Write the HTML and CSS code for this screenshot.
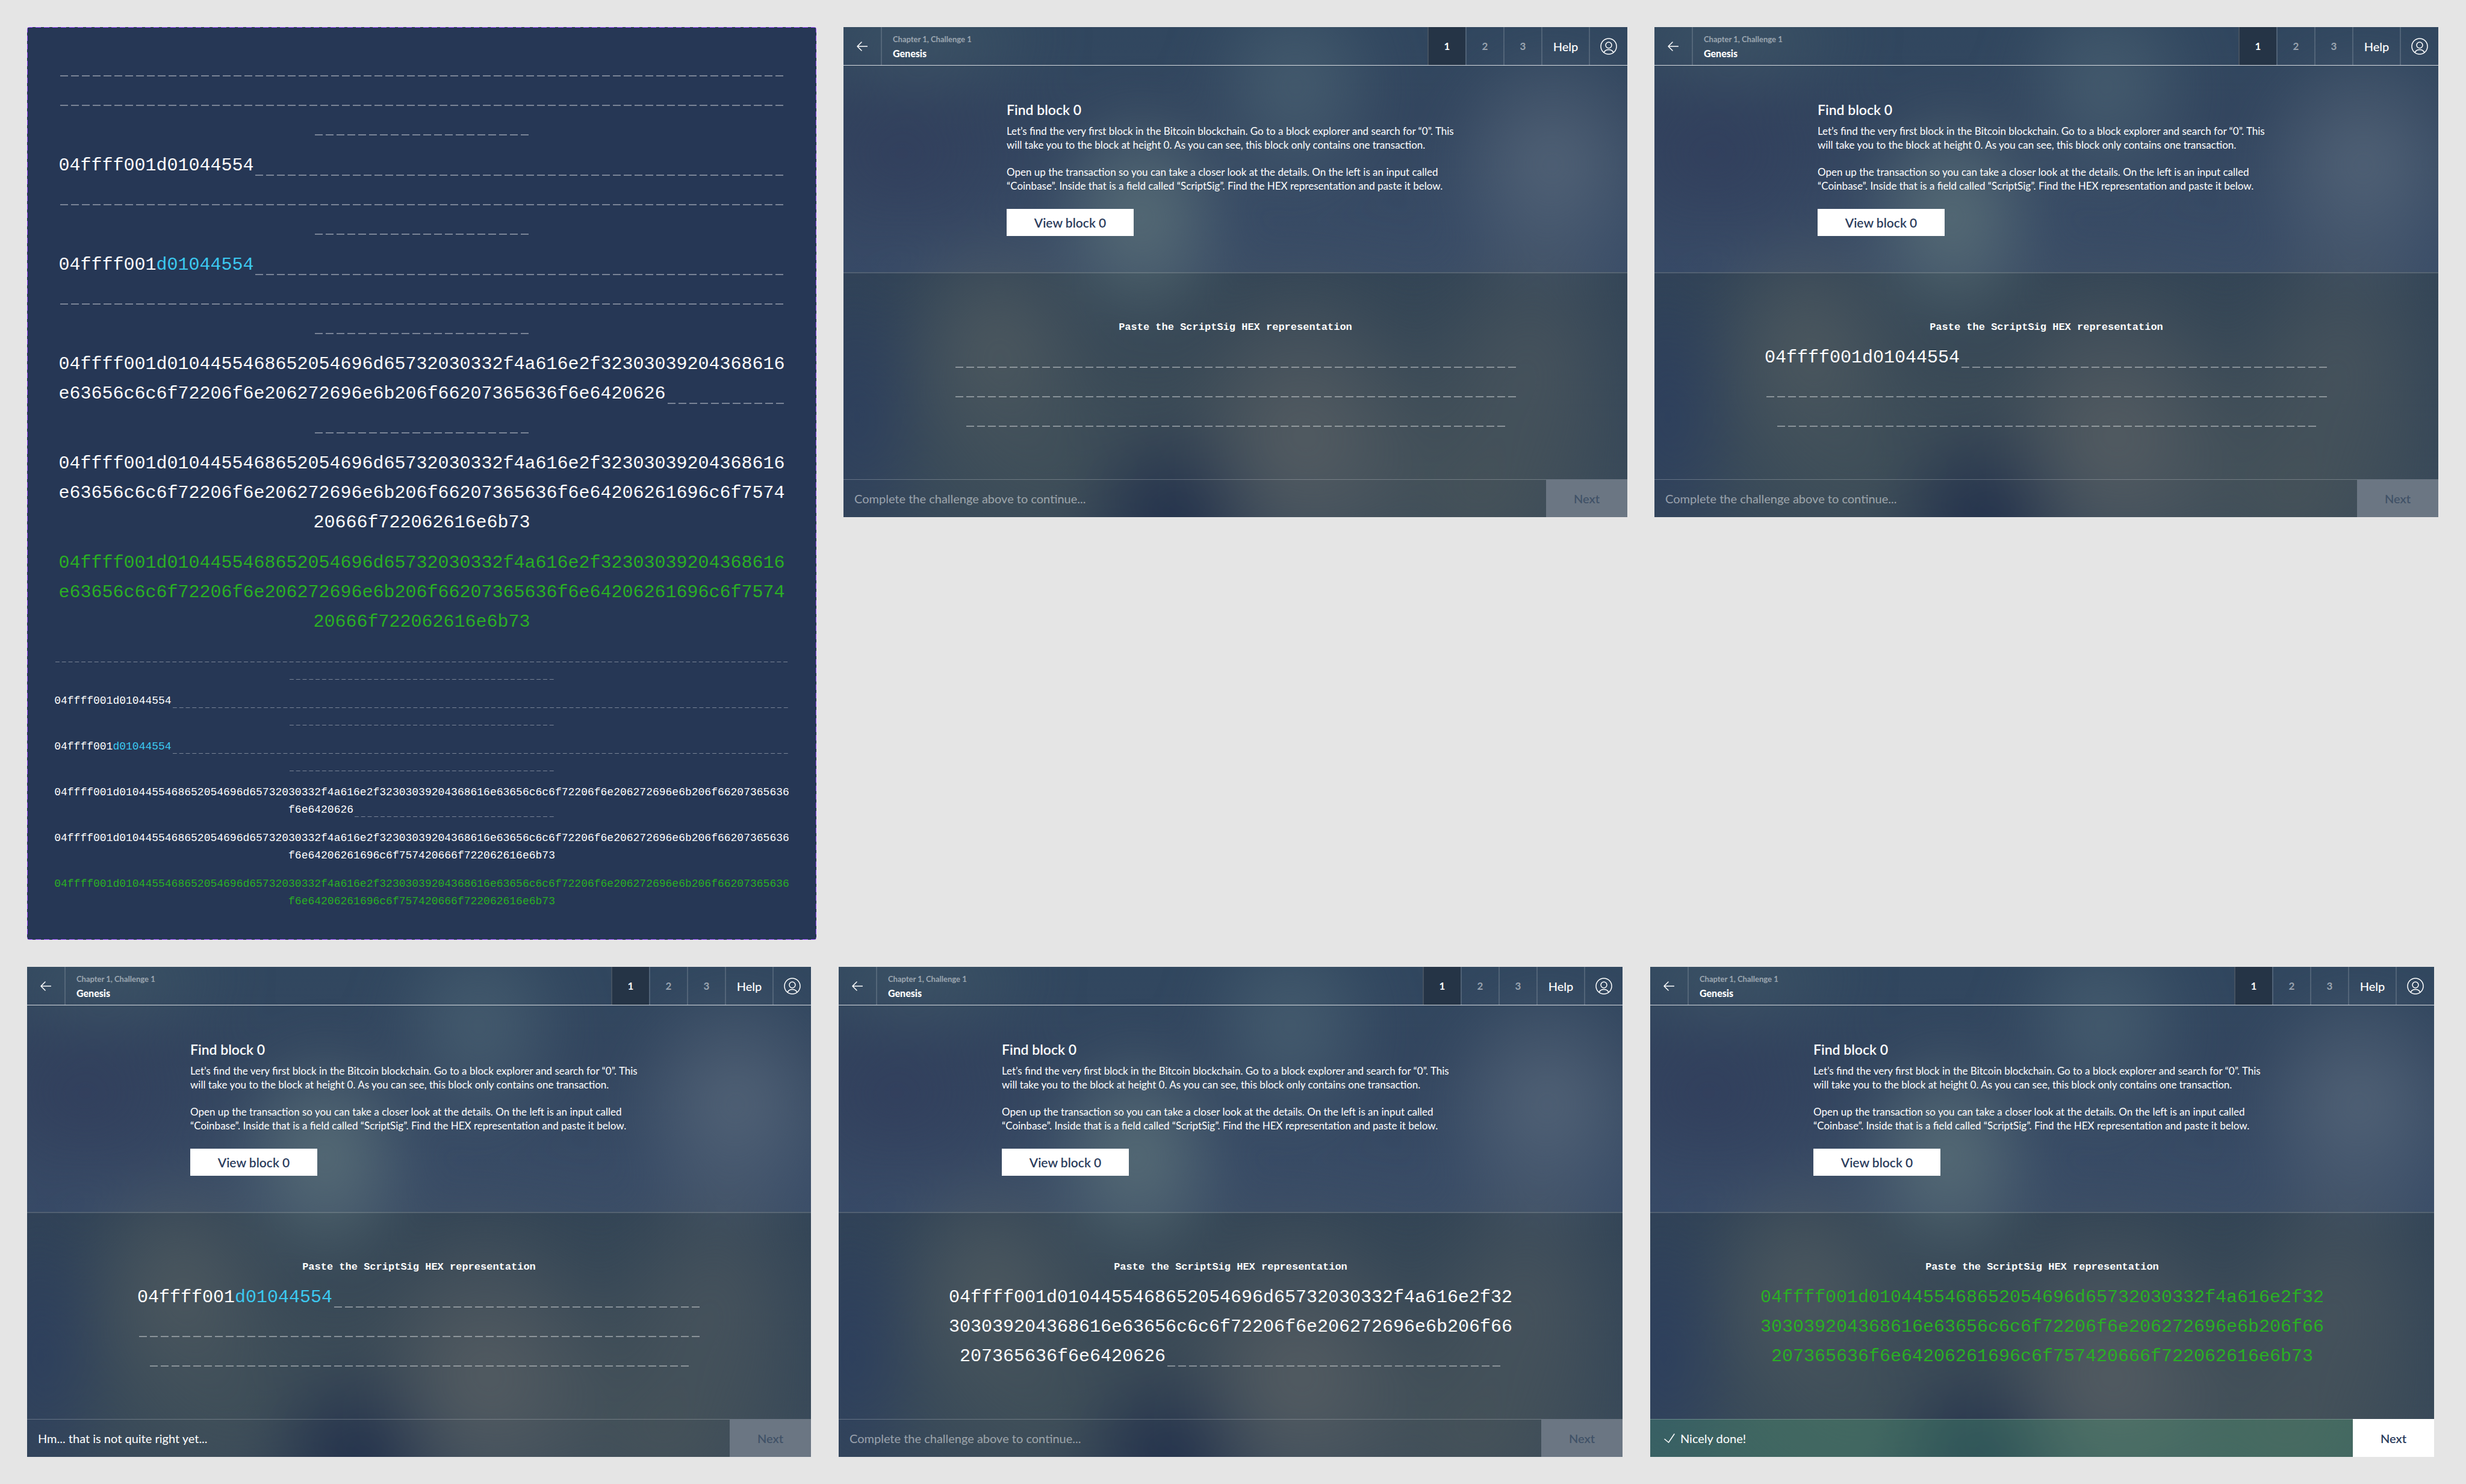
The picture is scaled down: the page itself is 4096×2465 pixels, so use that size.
FILE: index.html
```html
<!DOCTYPE html>
<html lang="en">
<head>
<meta charset="utf-8">
<meta name="viewport" content="width=device-width, initial-scale=1">
<title>Genesis – Chapter 1, Challenge 1</title>
<link rel="stylesheet" href="styles.css">
</head>
<body>
<svg class="sprite" aria-hidden="true">
  <symbol id="icon-back" viewBox="0 0 18 16"><path d="M17.5 8H1M8 1 1 8l7 7" /></symbol>
  <symbol id="icon-user" viewBox="0 0 28 28"><circle cx="14" cy="14" r="13" /><circle cx="14" cy="12" r="5" /><path d="M6 24.200c1.500-2.900 4.500-4.700 8-4.700s6.500 1.800 8 4.700" /></symbol>
  <symbol id="icon-check" viewBox="0 0 18 16"><path d="M1 9.500 7.500 15 17 1" /></symbol>
</svg>

<main class="board">
  <div class="row row-top">
    <section class="variants" aria-label="Hex input states">
      <div class="stack">
        <div class="hex">
          <p><span class="slots" style="--n:67"></span></p>
          <p><span class="slots" style="--n:67"></span></p>
          <p><span class="slots" style="--n:20"></span></p>
        </div>
        <div class="hex">
          <p>04ffff001d01044554<span class="slots" style="--n:49"></span></p>
          <p><span class="slots" style="--n:67"></span></p>
          <p><span class="slots" style="--n:20"></span></p>
        </div>
        <div class="hex">
          <p>04ffff001<mark>d01044554</mark><span class="slots" style="--n:49"></span></p>
          <p><span class="slots" style="--n:67"></span></p>
          <p><span class="slots" style="--n:20"></span></p>
        </div>
        <div class="hex">
          <p>04ffff001d0104455468652054696d65732030332f4a616e2f32303039204368616</p>
          <p>e63656c6c6f72206f6e206272696e6b206f66207365636f6e6420626<span class="slots" style="--n:11"></span></p>
          <p><span class="slots" style="--n:20"></span></p>
        </div>
        <div class="hex">
          <p>04ffff001d0104455468652054696d65732030332f4a616e2f32303039204368616</p>
          <p>e63656c6c6f72206f6e206272696e6b206f66207365636f6e64206261696c6f7574</p>
          <p>20666f722062616e6b73</p>
        </div>
        <div class="hex hex-done">
          <p>04ffff001d0104455468652054696d65732030332f4a616e2f32303039204368616</p>
          <p>e63656c6c6f72206f6e206272696e6b206f66207365636f6e64206261696c6f7574</p>
          <p>20666f722062616e6b73</p>
        </div>
      </div>
      <div class="stack">
        <div class="hex hex-small">
          <p><span class="slots" style="--n:113"></span></p>
          <p><span class="slots" style="--n:41"></span></p>
        </div>
        <div class="hex hex-small">
          <p>04ffff001d01044554<span class="slots" style="--n:95"></span></p>
          <p><span class="slots" style="--n:41"></span></p>
        </div>
        <div class="hex hex-small">
          <p>04ffff001<mark>d01044554</mark><span class="slots" style="--n:95"></span></p>
          <p><span class="slots" style="--n:41"></span></p>
        </div>
        <div class="hex hex-small">
          <p>04ffff001d0104455468652054696d65732030332f4a616e2f32303039204368616e63656c6c6f72206f6e206272696e6b206f66207365636</p>
          <p>f6e6420626<span class="slots" style="--n:31"></span></p>
        </div>
        <div class="hex hex-small">
          <p>04ffff001d0104455468652054696d65732030332f4a616e2f32303039204368616e63656c6c6f72206f6e206272696e6b206f66207365636</p>
          <p>f6e64206261696c6f757420666f722062616e6b73</p>
        </div>
        <div class="hex hex-small hex-done">
          <p>04ffff001d0104455468652054696d65732030332f4a616e2f32303039204368616e63656c6c6f72206f6e206272696e6b206f66207365636</p>
          <p>f6e64206261696c6f757420666f722062616e6b73</p>
        </div>
      </div>
    </section>

    <article class="screen">
      <header class="topbar">
        <button class="cell cell-back" aria-label="Back"><svg class="icon-back"><use href="#icon-back" /></svg></button>
        <div class="title"><p class="chapter">Chapter 1, Challenge 1</p><h1>Genesis</h1></div>
        <nav class="steps">
          <button class="cell active">1</button><button class="cell">2</button><button class="cell">3</button>
          <button class="cell cell-help">Help</button>
          <button class="cell" aria-label="Account"><svg class="icon-user"><use href="#icon-user" /></svg></button>
        </nav>
      </header>
      <section class="intro">
        <div class="copy">
          <h2>Find block 0</h2>
          <p>Let’s find the very first block in the Bitcoin blockchain. Go to a block explorer and search for “0”. This<br>will take you to the block at height 0. As you can see, this block only contains one transaction.</p>
          <p>Open up the transaction so you can take a closer look at the details. On the left is an input called<br>“Coinbase”. Inside that is a field called “ScriptSig”. Find the HEX representation and paste it below.</p>
          <button class="view">View block 0</button>
        </div>
      </section>
      <section class="answer">
        <h3>Paste the ScriptSig HEX representation</h3>
        <div class="hex">
          <p><span class="slots" style="--n:52"></span></p>
          <p><span class="slots" style="--n:52"></span></p>
          <p><span class="slots" style="--n:50"></span></p>
        </div>
      </section>
      <footer class="status">
        <p class="message">Complete the challenge above to continue...</p>
        <button class="next" disabled>Next</button>
      </footer>
    </article>

    <article class="screen">
      <header class="topbar">
        <button class="cell cell-back" aria-label="Back"><svg class="icon-back"><use href="#icon-back" /></svg></button>
        <div class="title"><p class="chapter">Chapter 1, Challenge 1</p><h1>Genesis</h1></div>
        <nav class="steps">
          <button class="cell active">1</button><button class="cell">2</button><button class="cell">3</button>
          <button class="cell cell-help">Help</button>
          <button class="cell" aria-label="Account"><svg class="icon-user"><use href="#icon-user" /></svg></button>
        </nav>
      </header>
      <section class="intro">
        <div class="copy">
          <h2>Find block 0</h2>
          <p>Let’s find the very first block in the Bitcoin blockchain. Go to a block explorer and search for “0”. This<br>will take you to the block at height 0. As you can see, this block only contains one transaction.</p>
          <p>Open up the transaction so you can take a closer look at the details. On the left is an input called<br>“Coinbase”. Inside that is a field called “ScriptSig”. Find the HEX representation and paste it below.</p>
          <button class="view">View block 0</button>
        </div>
      </section>
      <section class="answer">
        <h3>Paste the ScriptSig HEX representation</h3>
        <div class="hex">
          <p>04ffff001d01044554<span class="slots" style="--n:34"></span></p>
          <p><span class="slots" style="--n:52"></span></p>
          <p><span class="slots" style="--n:50"></span></p>
        </div>
      </section>
      <footer class="status">
        <p class="message">Complete the challenge above to continue...</p>
        <button class="next" disabled>Next</button>
      </footer>
    </article>
  </div>

  <div class="row row-bottom">
    <article class="screen">
      <header class="topbar">
        <button class="cell cell-back" aria-label="Back"><svg class="icon-back"><use href="#icon-back" /></svg></button>
        <div class="title"><p class="chapter">Chapter 1, Challenge 1</p><h1>Genesis</h1></div>
        <nav class="steps">
          <button class="cell active">1</button><button class="cell">2</button><button class="cell">3</button>
          <button class="cell cell-help">Help</button>
          <button class="cell" aria-label="Account"><svg class="icon-user"><use href="#icon-user" /></svg></button>
        </nav>
      </header>
      <section class="intro">
        <div class="copy">
          <h2>Find block 0</h2>
          <p>Let’s find the very first block in the Bitcoin blockchain. Go to a block explorer and search for “0”. This<br>will take you to the block at height 0. As you can see, this block only contains one transaction.</p>
          <p>Open up the transaction so you can take a closer look at the details. On the left is an input called<br>“Coinbase”. Inside that is a field called “ScriptSig”. Find the HEX representation and paste it below.</p>
          <button class="view">View block 0</button>
        </div>
      </section>
      <section class="answer">
        <h3>Paste the ScriptSig HEX representation</h3>
        <div class="hex">
          <p>04ffff001<mark>d01044554</mark><span class="slots" style="--n:34"></span></p>
          <p><span class="slots" style="--n:52"></span></p>
          <p><span class="slots" style="--n:50"></span></p>
        </div>
      </section>
      <footer class="status status-wrong">
        <p class="message">Hm... that is not quite right yet...</p>
        <button class="next" disabled>Next</button>
      </footer>
    </article>

    <article class="screen">
      <header class="topbar">
        <button class="cell cell-back" aria-label="Back"><svg class="icon-back"><use href="#icon-back" /></svg></button>
        <div class="title"><p class="chapter">Chapter 1, Challenge 1</p><h1>Genesis</h1></div>
        <nav class="steps">
          <button class="cell active">1</button><button class="cell">2</button><button class="cell">3</button>
          <button class="cell cell-help">Help</button>
          <button class="cell" aria-label="Account"><svg class="icon-user"><use href="#icon-user" /></svg></button>
        </nav>
      </header>
      <section class="intro">
        <div class="copy">
          <h2>Find block 0</h2>
          <p>Let’s find the very first block in the Bitcoin blockchain. Go to a block explorer and search for “0”. This<br>will take you to the block at height 0. As you can see, this block only contains one transaction.</p>
          <p>Open up the transaction so you can take a closer look at the details. On the left is an input called<br>“Coinbase”. Inside that is a field called “ScriptSig”. Find the HEX representation and paste it below.</p>
          <button class="view">View block 0</button>
        </div>
      </section>
      <section class="answer">
        <h3>Paste the ScriptSig HEX representation</h3>
        <div class="hex">
          <p>04ffff001d0104455468652054696d65732030332f4a616e2f32</p>
          <p>303039204368616e63656c6c6f72206f6e206272696e6b206f66</p>
          <p>207365636f6e6420626<span class="slots" style="--n:31"></span></p>
        </div>
      </section>
      <footer class="status">
        <p class="message">Complete the challenge above to continue...</p>
        <button class="next" disabled>Next</button>
      </footer>
    </article>

    <article class="screen">
      <header class="topbar">
        <button class="cell cell-back" aria-label="Back"><svg class="icon-back"><use href="#icon-back" /></svg></button>
        <div class="title"><p class="chapter">Chapter 1, Challenge 1</p><h1>Genesis</h1></div>
        <nav class="steps">
          <button class="cell active">1</button><button class="cell">2</button><button class="cell">3</button>
          <button class="cell cell-help">Help</button>
          <button class="cell" aria-label="Account"><svg class="icon-user"><use href="#icon-user" /></svg></button>
        </nav>
      </header>
      <section class="intro">
        <div class="copy">
          <h2>Find block 0</h2>
          <p>Let’s find the very first block in the Bitcoin blockchain. Go to a block explorer and search for “0”. This<br>will take you to the block at height 0. As you can see, this block only contains one transaction.</p>
          <p>Open up the transaction so you can take a closer look at the details. On the left is an input called<br>“Coinbase”. Inside that is a field called “ScriptSig”. Find the HEX representation and paste it below.</p>
          <button class="view">View block 0</button>
        </div>
      </section>
      <section class="answer">
        <h3>Paste the ScriptSig HEX representation</h3>
        <div class="hex hex-done">
          <p>04ffff001d0104455468652054696d65732030332f4a616e2f32</p>
          <p>303039204368616e63656c6c6f72206f6e206272696e6b206f66</p>
          <p>207365636f6e64206261696c6f757420666f722062616e6b73</p>
        </div>
      </section>
      <footer class="status status-right">
        <p class="message"><svg class="icon-check"><use href="#icon-check" /></svg>Nicely done!</p>
        <button class="next">Next</button>
      </footer>
    </article>
  </div>
</main>
</body>
</html>
```
FILE: styles.css
```css
* { box-sizing: border-box; }

body {
  margin: 0;
  background: #e5e5e5;
  color: #fff;
  font-family: Lato, "Open Sans", sans-serif;
}

h1, h2, h3, p { margin: 0; }

button {
  margin: 0;
  padding: 0;
  border: 0;
  background: none;
  color: inherit;
  font: inherit;
}

svg { fill: none; stroke: currentColor; stroke-width: 1.5; stroke-linecap: round; stroke-linejoin: round; }
.sprite { display: none; }

/* Board */
.board {
  display: flex;
  flex-direction: column;
  gap: 45px;
  padding: 45px 46px 45px 45px;
}
.row { display: grid; gap: 45px; align-items: start; }
.row-top { grid-template-columns: 1311fr 1302fr 1302fr; }
.row-bottom { grid-template-columns: repeat(3, 1fr); column-gap: 46px; padding-right: 7px; }

/* Panel with every state of the hex field */
.variants {
  --dash: #9747ff 0 9px, transparent 9px 14px;
  display: flex;
  flex-direction: column;
  gap: 16px;
  padding: 41px 0 49px;
  border-radius: 4px;
  background:
    repeating-linear-gradient(90deg, var(--dash)) 0 0 / 100% 1px no-repeat,
    repeating-linear-gradient(90deg, var(--dash)) 0 100% / 100% 1px no-repeat,
    repeating-linear-gradient(180deg, var(--dash)) 0 0 / 1px 100% no-repeat,
    repeating-linear-gradient(180deg, var(--dash)) 100% 0 / 1px 100% no-repeat,
    #263755;
}
.stack { display: flex; flex-direction: column; gap: 18px; }

/* Hex field: typed characters followed by one dash per empty place */
.hex {
  --dash-from: 3px;
  --dash-to: 16px;
  --dash-top: 39px;
  --dash-height: 2px;
  font-family: "Liberation Mono", monospace;
  font-size: 30px;
  line-height: 49px;
  text-align: center;
  white-space: nowrap;
}
.hex p { display: flex; justify-content: center; height: 49px; }
.hex mark { background: none; color: #3cc9f0; }
.hex-done { color: #2ab024; }
.slots {
  width: calc(var(--n) * 1ch);
  background: linear-gradient(90deg, transparent var(--dash-from), rgba(255, 255, 255, .38) var(--dash-from) var(--dash-to), transparent var(--dash-to)) 0 var(--dash-top) / 1ch var(--dash-height) repeat-x;
}
.hex-small {
  --dash-from: 2px;
  --dash-to: 9px;
  --dash-top: 25px;
  --dash-height: 1px;
  font-size: 18px;
  line-height: 29px;
}
.hex-small p { height: 29px; }

/* Challenge screen */
.screen {
  position: relative;
  isolation: isolate;
  overflow: hidden;
  display: flex;
  flex-direction: column;
  aspect-ratio: 1302 / 814;
  background: linear-gradient(#31475f 0, #33465f 18%, #3a4d68 50%, #324456 50%, #35475a 100%);
}
/* Soft, out-of-focus lights behind the whole screen */
.screen::before {
  content: "";
  position: absolute;
  z-index: -1;
  inset: -60px;
  filter: blur(36px);
  background:
    radial-gradient(12% 22% at 57% 17%, rgba(78, 102, 118, .7), transparent),
    radial-gradient(14% 24% at 87% 31%, rgba(92, 108, 126, .75), transparent),
    radial-gradient(12% 22% at 39% 40%, rgba(94, 116, 122, .85), transparent),
    radial-gradient(16% 14% at 14% 8%, rgba(72, 96, 108, .5), transparent),
    radial-gradient(20% 22% at 11% 29%, rgba(48, 58, 90, .6), transparent),
    radial-gradient(13% 24% at 22% 63%, rgba(84, 94, 98, .75), transparent),
    radial-gradient(15% 32% at 58% 80%, rgba(92, 98, 102, .75), transparent),
    radial-gradient(13% 25% at 85% 64%, rgba(80, 90, 96, .6), transparent),
    radial-gradient(13% 22% at 43% 96%, rgba(32, 46, 74, 1), transparent),
    radial-gradient(10% 34% at 5% 75%, rgba(42, 60, 96, .7), transparent),
    radial-gradient(22% 32% at 79% 90%, rgba(78, 88, 90, .65), transparent),
    radial-gradient(24% 30% at 27% 86%, rgba(72, 86, 90, .5), transparent),
    radial-gradient(50% 36% at 54% 76%, rgba(68, 80, 84, .5), transparent);
}

.topbar {
  display: flex;
  height: 64px;
  border-bottom: 1px solid rgba(255, 255, 255, .8);
}
.cell {
  display: flex;
  align-items: center;
  justify-content: center;
  width: 63px;
  border-left: 2px solid rgba(255, 255, 255, .15);
  color: rgba(255, 255, 255, .5);
  font-size: 17px;
  font-weight: 700;
}
.cell-back { width: 64px; border-left: 0; border-right: 2px solid rgba(255, 255, 255, .15); color: #fff; }
.cell.active { background: #253446; color: #fff; }
.cell-help { width: 79px; color: #fff; font-size: 20px; font-weight: 500; }
.cell:last-child { width: 64px; color: #fff; }
.steps { display: flex; margin-left: auto; }
.title { display: flex; flex-direction: column; justify-content: center; padding-left: 18px; line-height: 23px; }
.chapter { color: rgba(255, 255, 255, .5); font-size: 13px; font-weight: 700; }
.title h1 { font-size: 16px; font-weight: 900; }
.icon-back { width: 18px; height: 16px; }
.icon-user { width: 28px; height: 28px; }

.intro, .answer {
  display: flex;
  flex: 1;
  flex-direction: column;
  align-items: center;
  justify-content: center;
}
.copy { width: 760px; font-size: 17px; line-height: 23px; }
.copy h2 { margin-bottom: 10px; font-size: 23px; font-weight: 600; line-height: 28px; }
.copy p + p { margin-top: 22px; }
.view {
  display: block;
  width: 211px;
  height: 45px;
  margin-top: 27px;
  background: #fff;
  color: #2b3c5c;
  font-size: 21px;
  font-weight: 600;
}

.answer { border-top: 2px solid rgba(255, 255, 255, .16); }
.answer h3 {
  margin-bottom: 14px;
  font-family: "Liberation Mono", monospace;
  font-size: 17px;
  line-height: 24px;
}

.status { display: flex; height: 63px; }
.message {
  display: flex;
  flex: 1;
  align-items: center;
  padding-left: 18px;
  border-top: 1px solid rgba(255, 255, 255, .25);
  color: rgba(255, 255, 255, .5);
  font-size: 20px;
}
.status-wrong .message { color: #fff; }
.status-right .message { gap: 9px; padding-left: 23px; background: rgba(80, 182, 122, .25); color: #fff; }
.icon-check { width: 18px; height: 16px; }
.next { width: 135px; background: #fff; color: #2b3c5c; font-size: 20px; font-weight: 600; }
.next:disabled { background: #6b7683; color: #415267; }
```
